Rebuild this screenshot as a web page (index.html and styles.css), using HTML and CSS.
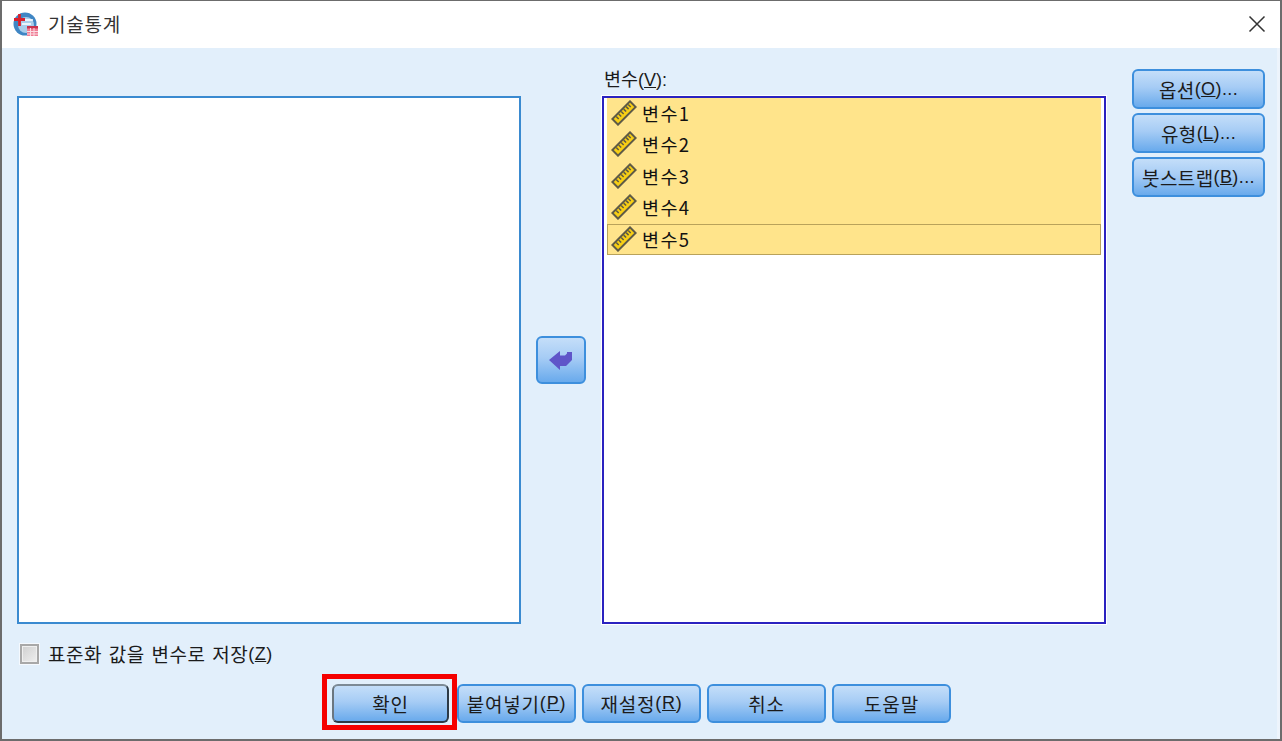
FILE: index.html
```html
<!DOCTYPE html>
<html lang="ko">
<head>
<meta charset="utf-8">
<title>기술통계</title>
<link rel="stylesheet" href="styles.css">
</head>
<body>
<svg class="defs" width="0" height="0" aria-hidden="true">
  <symbol id="ruler" viewBox="0 0 26 26">
    <g transform="rotate(-45 13 13)">
      <rect x="-0.500" y="8" width="27" height="10" fill="#5e5a46"/>
      <rect x="1.500" y="10" width="23" height="6" fill="#f8cf14"/>
      <path d="M5 10v3.500M8.500 10v3.500M12 10v3.500M15.500 10v3.500M19 10v3.500M22 10v3.500" stroke="#5e5a46" stroke-width="1.500" fill="none"/>
    </g>
  </symbol>
</svg>
<div class="window">
  <header class="titlebar">
    <svg class="app-icon" width="26" height="26" viewBox="0 0 26 26" aria-hidden="true">
      <circle cx="12" cy="13" r="11.500" fill="#3f86c4"/>
      <circle cx="13" cy="14" r="8" fill="#a9cdea"/>
      <path d="M9 9h11M9 13h9" stroke="#fff" stroke-width="1.400"/>
      <path d="M1 8.500h11M6.500 3v12" stroke="#d8202c" stroke-width="2.800"/>
      <rect x="14" y="15" width="11" height="10" fill="#ef7d95"/>
      <path d="M14 15h11v2.500H14z" fill="#c8324d"/>
      <path d="M17.500 17v8M21 17v8M14 20.500h11M14 23h11" stroke="#fbdde3" stroke-width="1"/>
    </svg>
    <span class="title">기술통계</span>
    <svg class="close" width="18" height="18" viewBox="0 0 18 18" aria-label="닫기">
      <path d="M1.500 1.500l15 15M16.500 1.500l-15 15" stroke="#333" stroke-width="1.500" fill="none"/>
    </svg>
  </header>
  <main class="content">
    <div class="columns">
      <div class="source-col">
        <div class="listbox source"></div>
      </div>
      <div class="move-col">
        <button class="btn move" type="button" aria-label="이동">
          <svg width="26" height="24" viewBox="0 0 26 24" aria-hidden="true">
            <path d="M1 12 L12 3 L12 7.500 L17 7.500 L19 5.500 L19 4 L24 4 L24 12 L18 18 L12 18 L12 22 Z" fill="#5f55c9"/>
          </svg>
        </button>
      </div>
      <div class="target-col">
        <label class="field-label">변수<span class="paren">(<u>V</u>):</span></label>
        <ul class="listbox target">
          <li class="var"><svg class="ruler" width="26" height="26"><use href="#ruler"/></svg>변수1</li>
          <li class="var"><svg class="ruler" width="26" height="26"><use href="#ruler"/></svg>변수2</li>
          <li class="var"><svg class="ruler" width="26" height="26"><use href="#ruler"/></svg>변수3</li>
          <li class="var"><svg class="ruler" width="26" height="26"><use href="#ruler"/></svg>변수4</li>
          <li class="var current"><svg class="ruler" width="26" height="26"><use href="#ruler"/></svg>변수5</li>
        </ul>
      </div>
      <div class="side-col">
        <button class="btn side" type="button">옵션<span class="paren">(<u>O</u>)...</span></button>
        <button class="btn side" type="button">유형<span class="paren">(<u>L</u>)...</span></button>
        <button class="btn side" type="button">붓스트랩<span class="paren">(<u>B</u>)...</span></button>
      </div>
    </div>
    <label class="check-row"><span class="checkbox"></span>표준화 값을 변수로 저장<span class="paren">(<u>Z</u>)</span></label>
    <div class="actions">
      <button class="btn action default" type="button">확인<span class="highlight"></span></button>
      <button class="btn action" type="button">붙여넣기<span class="paren">(<u>P</u>)</span></button>
      <button class="btn action" type="button">재설정<span class="paren">(<u>R</u>)</span></button>
      <button class="btn action" type="button">취소</button>
      <button class="btn action" type="button">도움말</button>
    </div>
  </main>
</div>
</body>
</html>
```
FILE: styles.css
```css
* { box-sizing: border-box; }
html, body { margin: 0; height: 100%; }
body {
  width: 1282px;
  height: 741px;
  overflow: hidden;
  background: #fff;
  font-family: "Noto Sans CJK KR", "Liberation Sans", sans-serif;
  font-size: 19px;
  color: #1b1b1b;
}
.defs { position: absolute; }
.window {
  width: 1282px;
  height: 741px;
  border: 2px solid #6c6c6c;
  border-top-width: 1px;
  border-bottom-width: 2px;
  display: flex;
  flex-direction: column;
}
.titlebar {
  height: 47px;
  flex: none;
  background: #fff;
  display: flex;
  align-items: center;
  padding: 0 14px 2px 11px;
}
.app-icon { flex: none; }
.title { margin-left: 9px; font-size: 19px; letter-spacing: 0.800px; line-height: 1; color: #333; }
.close { margin-left: auto; }
.content {
  flex: 1;
  background: #e2effb;
  padding: 21px 15px 0;
  display: flex;
  flex-direction: column;
  border-right: 3px solid #edf4fc;
}
.columns { display: flex; height: 555px; flex: none; }
.source-col { width: 504px; padding-top: 27px; flex: none; }
.listbox {
  margin: 0;
  padding: 0;
  list-style: none;
  width: 504px;
  height: 528px;
  background: #fff;
}
.source { border: 2px solid #3a8ad0; }
.move-col { width: 81px; flex: none; padding: 267px 0 0 15px; }
.target-col { width: 504px; flex: none; display: flex; flex-direction: column; }
.field-label { height: 27px; font-size: 18.500px; line-height: 18px; padding-left: 2px; }
.target { border: 2px solid #2a22c0; padding: 0 3px; outline: 1px solid #fff; }
.var {
  height: 31.500px;
  background: #ffe48b;
  display: flex;
  align-items: center;
  gap: 5px;
  padding: 0 0 2px 3px;
  font-size: 18.500px;
  letter-spacing: 1.400px;
  color: #111;
  border: 1px solid transparent;
}
.var.current { border-color: #b9a25a; height: 31px; }
.ruler { flex: none; }
.paren { font-family: "Liberation Sans", sans-serif; font-size: 18px; }
.btn {
  font: inherit;
  font-size: 19px;
  letter-spacing: 0.400px;
  color: #1b1b1b;
  border: 2px solid #3d8fdd;
  border-radius: 6px;
  background: linear-gradient(#c4def9 0%, #a6ccf5 45%, #69aaec 100%);
  padding: 0;
  display: flex;
  align-items: center;
  justify-content: center;
  white-space: nowrap;
}
.move { width: 50px; height: 48px; }
.side-col {
  margin-left: 26px;
  width: 133px;
  flex: none;
  display: flex;
  flex-direction: column;
  gap: 4px;
}
.side { height: 40px; }
.check-row {
  display: flex;
  align-items: center;
  margin: 19px 0 0 3px;
  height: 22px;
  font-size: 19px;
  letter-spacing: 0.500px;
  word-spacing: 1px;
  line-height: 22px;
}
.checkbox {
  width: 19px;
  height: 20px;
  margin-right: 9px;
  border: 2px solid #a8a8a8;
  background: linear-gradient(135deg, #cfcfcf, #efefef);
  box-shadow: inset 0 0 0 1px #efefef, 0 0 0 1px #f5f9fe;
}
.actions { display: flex; gap: 6px; margin: 19px 0 0 315px; }
.action { width: 119px; height: 39px; letter-spacing: 0.800px; }
.default {
  width: 117px;
  position: relative;
  margin-right: 2px;
  border-color: #2d3a46;
  border-top-color: #7d8a95;
  border-left-color: #6a7680;
}
.highlight {
  position: absolute;
  left: -12px;
  top: -12px;
  right: -10px;
  bottom: -9px;
  border: 5px solid #f50000;
  pointer-events: none;
}
```
